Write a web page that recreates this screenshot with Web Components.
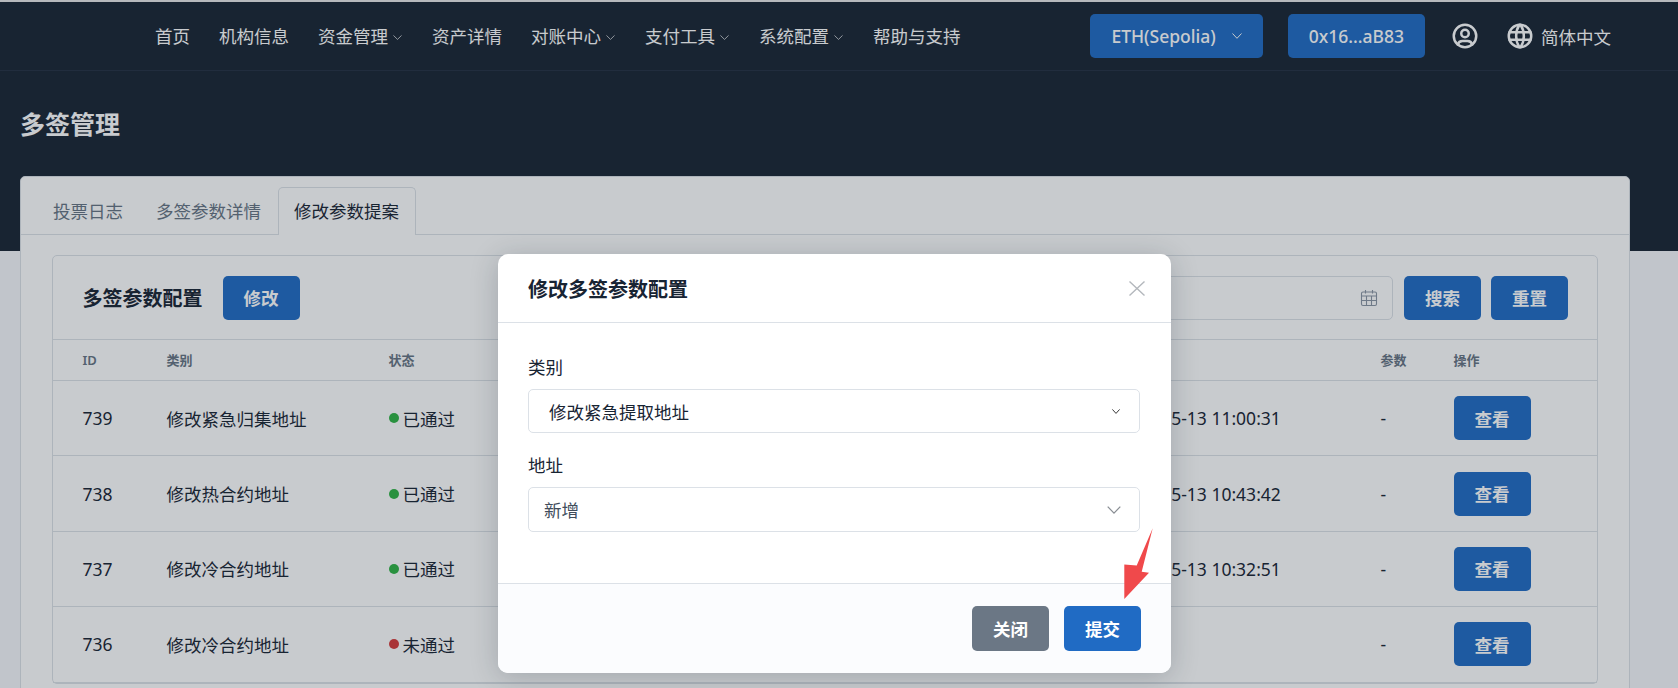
<!DOCTYPE html>
<html lang="zh-CN">
<head>
<meta charset="utf-8">
<title>多签管理</title>
<style>
html,body{margin:0;height:688px;overflow:hidden;background:#f6f8fb}
body{font-family:"Noto Sans","Noto Sans CJK SC",sans-serif;font-size:17.5px;color:#182433}
</style>
</head>
<body>
<x-app>
  <x-topnav>
    <x-nav-item>首页</x-nav-item>
    <x-nav-item>机构信息</x-nav-item>
    <x-nav-item caret>资金管理</x-nav-item>
    <x-nav-item>资产详情</x-nav-item>
    <x-nav-item caret>对账中心</x-nav-item>
    <x-nav-item caret>支付工具</x-nav-item>
    <x-nav-item caret>系统配置</x-nav-item>
    <x-nav-item>帮助与支持</x-nav-item>
    <x-btn slot="right" class="eth">ETH(Sepolia)<x-chevron style="margin-left:16px;width:10px;height:6px"></x-chevron></x-btn>
    <x-btn slot="right" class="addr">0x16...aB83</x-btn>
    <x-icon slot="right" name="user"></x-icon>
    <x-icon slot="right" name="world"></x-icon>
    <span slot="lang">简体中文</span>
  </x-topnav>
  <x-page>
    <span slot="title">多签管理</span>
    <x-tabs>
      <x-tab>投票日志</x-tab>
      <x-tab>多签参数详情</x-tab>
      <x-tab active>修改参数提案</x-tab>
    </x-tabs>
    <x-panel>
      <span slot="title">多签参数配置</span>
      <x-btn slot="title-action">修改</x-btn>
      <x-date-input slot="filters"></x-date-input>
      <x-btn slot="filters" style="margin-left:11px">搜索</x-btn>
      <x-btn slot="filters" style="margin-left:10px">重置</x-btn>
      <x-row head></x-row>
      <x-row rid="739" kind="修改紧急归集地址" status="已通过" time="2025-05-13 11:00:31"></x-row>
      <x-row rid="738" kind="修改热合约地址" status="已通过" time="2025-05-13 10:43:42"></x-row>
      <x-row rid="737" kind="修改冷合约地址" status="已通过" time="2025-05-13 10:32:51"></x-row>
      <x-row rid="736" kind="修改冷合约地址" status="未通过" fail time=""></x-row>
    </x-panel>
  </x-page>
  <x-modal>
    <span slot="title">修改多签参数配置</span>
    <x-field label="类别"><x-select variant="a">修改紧急提取地址</x-select></x-field>
    <x-field label="地址"><x-select variant="b">新增</x-select></x-field>
    <x-btn slot="footer" tone="secondary">关闭</x-btn>
    <x-btn slot="footer" tone="primary">提交</x-btn>
  </x-modal>
  <x-arrow></x-arrow>
</x-app>

<script>
function def(name, html, extra){
  const tpl=document.createElement('template');
  tpl.innerHTML=html;
  customElements.define(name, class extends HTMLElement{
    constructor(){super();this.attachShadow({mode:'open'}).appendChild(tpl.content.cloneNode(true));}
    connectedCallback(){ if(extra) extra(this,this.shadowRoot); }
  });
}

def('x-app',`<style>:host{display:block;height:688px;overflow:hidden;position:relative}
.strip{height:2px;background:#e8e8e8}
</style><div class="strip"></div><slot></slot>`);

def('x-chevron',`<style>:host{display:inline-block;width:11px;height:6px;flex:none}
svg{display:block;width:100%;height:100%;overflow:visible}</style>
<svg viewBox="0 0 10 6" preserveAspectRatio="none"><path d="M.5 .5L5 5.3L9.5 .5" fill="none" stroke="currentColor" stroke-width="var(--w,1)"/></svg>`);

def('x-topnav',`<style>
:host{display:flex;align-items:center;height:69px;box-sizing:border-box;border-bottom:1px solid #243042;background:#182433;color:#fff;padding:0 67px 0 155px}
.left{display:flex;align-items:center;gap:29px}
.right{display:flex;align-items:center;margin-left:auto;gap:25px}
.lang{margin-left:6px}
</style><div class="left"><slot></slot></div><div class="right"><slot name="right"></slot></div><div class="lang"><slot name="lang"></slot></div>`);

def('x-nav-item',`<style>:host{display:flex;align-items:center;white-space:nowrap;line-height:24px}
x-chevron{display:none;margin-left:5px;width:9px;margin-right:1px;height:5px;margin-top:3px;opacity:.8}
:host([caret]) x-chevron{display:block}</style><slot></slot><x-chevron></x-chevron>`);

def('x-btn',`<style>:host{display:inline-flex;align-items:center;justify-content:center;box-sizing:border-box;height:44px;padding:0 21px;border-radius:5px;background:#206bc4;color:#fff;font-weight:600;font-size:17.5px;white-space:nowrap;flex:none}
:host([tone=secondary]){background:#6b7785;height:45px}
:host([tone=primary]){height:45px}
:host(.eth),:host(.addr){font-weight:500}</style><slot></slot>`);

const ICONS={
 user:'<circle cx="12" cy="12" r="9"/><circle cx="12" cy="10" r="3"/><path d="M6.168 18.849a4 4 0 0 1 3.832 -2.849h4a4 4 0 0 1 3.834 2.855"/>',
 world:'<path d="M3 12a9 9 0 1 0 18 0a9 9 0 0 0 -18 0"/><path d="M3.6 9h16.8"/><path d="M3.6 15h16.8"/><path d="M11.5 3a17 17 0 0 0 0 18"/><path d="M12.5 3a17 17 0 0 1 0 18"/>'
};
def('x-icon',`<style>:host{display:block;width:30px;height:30px;flex:none}svg{display:block;width:100%;height:100%;fill:none;stroke:currentColor;stroke-width:2;stroke-linecap:round;stroke-linejoin:round}</style><svg viewBox="0 0 24 24"></svg>`,
 (el,sr)=>{sr.querySelector('svg').innerHTML=ICONS[el.getAttribute('name')]||'';});

def('x-page',`<style>
:host{display:block;background:linear-gradient(#182433 0 180px,transparent 180px);padding:38px 48px 0 20px}
h1{margin:0 0 37px;font-size:25px;line-height:30px;font-weight:700;color:#fff}
.card{background:#fff;border:1px solid #dce1e7;border-radius:5px;padding-bottom:30px}
</style><h1><slot name="title"></slot></h1><div class="card"><slot></slot></div>`);

def('x-tabs',`<style>:host{display:flex;padding:10px 0 0 15.5px;border-bottom:1px solid #dce1e7;height:47px;box-sizing:content-box}</style><slot></slot>`);
def('x-tab',`<style>:host{display:flex;align-items:center;box-sizing:border-box;height:48px;padding:0 15.5px;border:1px solid transparent;border-bottom:0;color:#667382;white-space:nowrap;border-radius:5px 5px 0 0;padding-bottom:2px}
:host([active]){color:#182433;border-color:#dce1e7;background:#fff}</style><slot></slot>`);

def('x-panel',`<style>
:host{display:block;margin:20px 31px 0 30.5px;border:1px solid #dce1e7;border-radius:5px}
.head{display:flex;align-items:center;padding:20px 29px 20px 30px;height:84px;box-sizing:border-box;border-bottom:1px solid #dce1e7}
.title{font-size:20px;font-weight:700;margin-right:20px}
.filters{display:flex;align-items:center;margin-left:auto}
</style>
<div class="head"><div class="title"><slot name="title"></slot></div><slot name="title-action"></slot><div class="filters"><slot name="filters"></slot></div></div>
<slot></slot>`);

def('x-date-input',`<style>:host{display:flex;align-items:center;justify-content:flex-end;box-sizing:border-box;width:280px;height:44px;border:1px solid #dce1e7;border-radius:5px;padding-right:14px;color:#8a95a3}
svg{width:18px;height:18px;fill:none;stroke:currentColor;stroke-width:1.1}</style>
<svg viewBox="0 0 18 18"><rect x="1.5" y="3" width="15" height="13.5" rx="1.5"/><path d="M5.5 1v3.5M12.5 1v3.5M1.5 7h15M6.5 7v9.5M11.5 7v9.5M1.5 11.5h15"/></svg>`);

def('x-row',`<style>
:host{display:grid;grid-template-columns:84px 222px 727px 265px 73px 1fr;align-items:center;box-sizing:border-box;height:75.4px;padding-left:30px;border-bottom:1px solid #dce1e7;white-space:nowrap}
:host([head]){height:41px;font-size:13px;font-weight:600;color:#667382;line-height:16px}
.st{display:flex;align-items:center;gap:4px}
.dot{width:10px;height:10px;border-radius:50%;background:#2fb344;flex:none}
:host([fail]) .dot{background:#d63939}
</style><div class="a"></div><div class="b"></div><div class="c"></div><div class="d"></div><div class="e"></div><div class="f"></div>`,
 (el,sr)=>{
  const q=s=>sr.querySelector(s);
  if(el.hasAttribute('head')){
    q('.a').textContent='ID';q('.b').textContent='类别';q('.c').textContent='状态';q('.e').textContent='参数';q('.f').textContent='操作';return;
  }
  q('.a').textContent=el.getAttribute('rid');
  q('.b').textContent=el.getAttribute('kind');
  q('.c').innerHTML='<div class="st"><span class="dot"></span><span>'+el.getAttribute('status')+'</span></div>';
  q('.d').textContent=el.getAttribute('time');
  q('.e').textContent='-';
  q('.f').innerHTML='<x-btn>查看</x-btn>';
 });

def('x-modal',`<style>
:host{display:block;position:absolute;inset:0}
.backdrop{position:absolute;inset:0;background:rgba(24,36,51,.24)}
.modal{position:absolute;left:498px;top:254px;width:673px;height:419px;box-sizing:border-box;background:#fff;border-radius:10px;box-shadow:0 4px 28px rgba(24,36,51,.22);display:flex;flex-direction:column;overflow:hidden}
.hd{display:flex;align-items:center;justify-content:space-between;height:69px;box-sizing:border-box;flex:none;padding:0 26px 0 30px;border-bottom:1px solid #dce1e7}
.t{font-size:20px;font-weight:700}
.x{width:16px;height:15px;display:block;stroke:#b4b8bd;stroke-width:1.4;fill:none}
.bd{flex:1;padding:32px 31px 0 30px}
.ft{flex:none;height:90px;box-sizing:border-box;padding:22px 30px 0;display:flex;justify-content:flex-end;gap:15px;background:#fbfcfe;border-top:1px solid #dce1e7}
</style>
<div class="backdrop"></div>
<div class="modal">
 <div class="hd"><div class="t"><slot name="title"></slot></div><svg class="x" viewBox="0 0 16 15"><path d="M.5 .5L15.5 14.5M15.5 .5L.5 14.5"/></svg></div>
 <div class="bd"><slot></slot></div>
 <div class="ft"><slot name="footer"></slot></div>
</div>`);

def('x-field',`<style>:host{display:block;margin-bottom:20px}
.l{line-height:24px;margin-bottom:10px}</style><div class="l"></div><slot></slot>`,
 (el,sr)=>{sr.querySelector('.l').textContent=el.getAttribute('label');});

def('x-select',`<style>
:host{display:flex;align-items:center;justify-content:space-between;box-sizing:border-box;height:44px;padding:0 19px 0 20px;border:1px solid #dce1e7;border-radius:5px;background:#fff}
:host([variant=b]){height:45px;padding:0 18px 0 15px;color:#414d5c}
x-chevron{width:8px;height:5px;--w:1.2;color:#333}
:host([variant=b]) x-chevron{width:14px;height:8px;--w:.9;color:#8b8f95}
</style><slot></slot><x-chevron></x-chevron>`);

def('x-arrow',`<style>:host{display:block;position:absolute;left:1120px;top:525px;width:36px;height:78px}
svg{display:block;width:100%;height:100%}</style>
<svg viewBox="1120 525 36 78"><path fill="#f0494b" d="M1152.7 528.3L1136.7 565.5L1124.3 564.5L1124.3 599L1149 572.7L1141.7 571.7Z"/></svg>`);
</script>
</body>
</html>
